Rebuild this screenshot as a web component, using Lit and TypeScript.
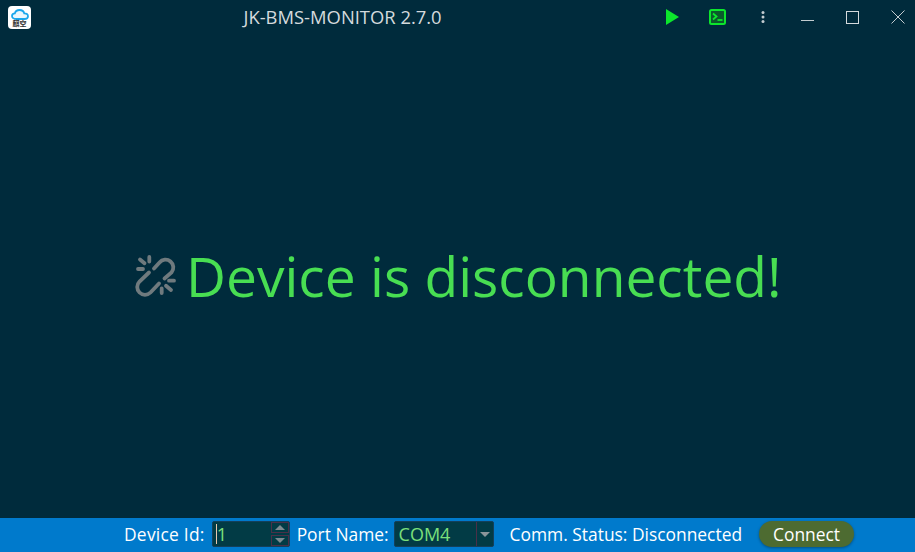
import { LitElement, html, css } from "lit";
import { customElement } from "lit/decorators.js";

@customElement("app-root")
export class AppRoot extends LitElement {
  static styles = css`
    :host { display: block; width: 915px; height: 552px; overflow: hidden; }
    * { box-sizing: border-box; }
    .win { width: 915px; height: 552px; display: flex; flex-direction: column; background: #002b3c; font-family: "Open Sans", "Noto Sans", sans-serif; color: #fff; }
    .title { height: 36px; display: flex; align-items: center; flex: none; }
    .logo { margin-left: 8px; width: 23px; height: 23px; margin-top: -1px; background: #fff; border-radius: 4px; display: flex; flex-direction: column; align-items: center; flex: none; }
    .logo svg { display: block; margin-top: 2px; }
    .logo span { font: 700 7px/7px "Noto Sans CJK SC", sans-serif; color: #333; }
    .name { margin-left: 212.5px; padding-bottom: 3px; font-size: 18.4px; color: #d4dadd; white-space: nowrap; }
    .tools { margin-left: auto; margin-right: -5px; display: flex; align-items: center; height: 34px; align-self: flex-start; }
    .cell { width: 45px; height: 34px; display: flex; align-items: center; justify-content: center; }
    .cell svg { display: block; }
    .min { align-items: flex-end; padding-bottom: 13px; }
    .main { flex: 1; display: flex; align-items: center; padding-left: 134px; padding-bottom: 2px; gap: 8px; }
    .msg { font-size: 55.1px; color: #48de52; line-height: 66px; white-space: nowrap; }
    .status { height: 34px; flex: none; background: #007acc; display: flex; align-items: center; padding-left: 124px; padding-bottom: 2px; font-size: 17.4px; white-space: nowrap; }
    .lbl-id { letter-spacing: .25px; }
    .spin { margin-left: 7px; width: 78px; height: 26px; background: #023b45; border: 1px solid #14405a; border-radius: 2px; display: flex; align-items: center; }
    .caret { width: 1px; height: 20px; background: #e8c9b0; margin-left: 3px; }
    .val { color: #7be07b; font-size: 18px; }
    .arrows { margin-left: auto; width: 18px; height: 24px; display: flex; flex-direction: column; gap: 2px; }
    .arrow { flex: 1; border: 1px solid #4a3048; display: flex; align-items: center; justify-content: center; }
    .port { margin-left: 7px; }
    .combo { margin-left: 5px; width: 100px; height: 26px; background: #023b45; border: 1px solid #14405a; border-radius: 2px; display: flex; align-items: center; padding-left: 4px; }
    .combo .drop { margin-left: auto; width: 17px; height: 24px; border-left: 1px solid #4a3048; display: flex; align-items: center; justify-content: center; }
    .comm { margin-left: 16px; }
    .btn { margin-left: 17px; width: 95px; height: 26px; border-radius: 13px; background: #4d6b31; display: flex; align-items: center; justify-content: center; box-shadow: 0 1px 3px rgba(0,0,0,.35); }
  `;

  render() {
    return html`<div class="win">
      <div class="title">
        <div class="logo">
          <svg width="18" height="12" viewBox="0 0 18 12"><path d="M5 11C2.5 11 1 9.6 1 8C1 6.4 2.2 5.4 3.8 5.4C4.4 3.3 6.2 2 8.5 2C11 2 12.8 3.5 13.3 5.4C15.4 5.3 17 6.4 17 8.2C17 9.8 15.6 11 13.5 11Z" fill="#eaf7fd" stroke="#1aa7ec" stroke-width="1.8"/></svg>
          <span>麒空</span>
        </div>
        <div class="name">JK-BMS-MONITOR 2.7.0</div>
        <div class="tools">
          <div class="cell"><svg width="13" height="16" viewBox="0 0 13 16"><path d="M0 0L13 8L0 16Z" fill="#0ce62c"/></svg></div>
          <div class="cell"><svg width="17" height="16" viewBox="0 0 17 16"><rect x="1" y="1" width="15" height="14" rx="1.5" fill="#0b5a2c" stroke="#0ce62c" stroke-width="2"/><path d="M4 4.5L7.5 7.5L4 10.5" fill="none" stroke="#0ce62c" stroke-width="1.8"/><path d="M8.5 11H13.5" stroke="#0ce62c" stroke-width="1.8"/></svg></div>
          <div class="cell"><svg width="4" height="12" viewBox="0 0 4 12"><circle cx="2" cy="1.6" r="1.5" fill="#c3ccd0"/><circle cx="2" cy="6" r="1.5" fill="#c3ccd0"/><circle cx="2" cy="10.4" r="1.5" fill="#c3ccd0"/></svg></div>
          <div class="cell min"><svg width="13" height="1" viewBox="0 0 13 1"><path d="M0 .5H13" stroke="#c3ccd0" stroke-width="1"/></svg></div>
          <div class="cell"><svg width="13" height="13" viewBox="0 0 13 13" style="margin-top:1px"><rect x=".5" y=".5" width="12" height="12" fill="none" stroke="#d4dadd" stroke-width="1"/></svg></div>
          <div class="cell"><svg width="14" height="14" viewBox="0 0 14 14"><path d="M.5 .5L13.5 13.5M13.5 .5L.5 13.5" stroke="#c3ccd0" stroke-width="1"/></svg></div>
        </div>
      </div>
      <div class="main">
        <svg width="44" height="44" viewBox="0 0 44 44" fill="none" stroke="#6f7a7e" stroke-width="3.8" stroke-linecap="round">
          <path d="M20 14.5L25.5 8.5A7.6 7.6 0 0 1 37.5 18.5L30.5 24.5"/>
          <path d="M15 18.5L5.5 27.5A7.6 7.6 0 0 0 16.5 38.5L25 29.5"/>
          <path d="M15.3 3V7.5M6 5.5L10.5 9.3M4 15H9M35 26.7H40M32 31.7L37 36M27.7 34.5V39"/>
        </svg>
        <div class="msg">Device is disconnected!</div>
      </div>
      <div class="status">
        <span class="lbl-id">Device Id:</span>
        <div class="spin"><div class="caret"></div><span class="val">1</span>
          <div class="arrows">
            <div class="arrow"><svg width="10" height="5"><path d="M5 0L10 5H0Z" fill="#7d8a90"/></svg></div>
            <div class="arrow"><svg width="10" height="5"><path d="M0 0H10L5 5Z" fill="#7d8a90"/></svg></div>
          </div>
        </div>
        <span class="port">Port Name:</span>
        <div class="combo"><span class="val">COM4</span><div class="drop"><svg width="10" height="5"><path d="M0 0H10L5 5Z" fill="#8a959a"/></svg></div></div>
        <span class="comm">Comm. Status: Disconnected</span>
        <div class="btn">Connect</div>
      </div>
    </div>`;
  }
}
